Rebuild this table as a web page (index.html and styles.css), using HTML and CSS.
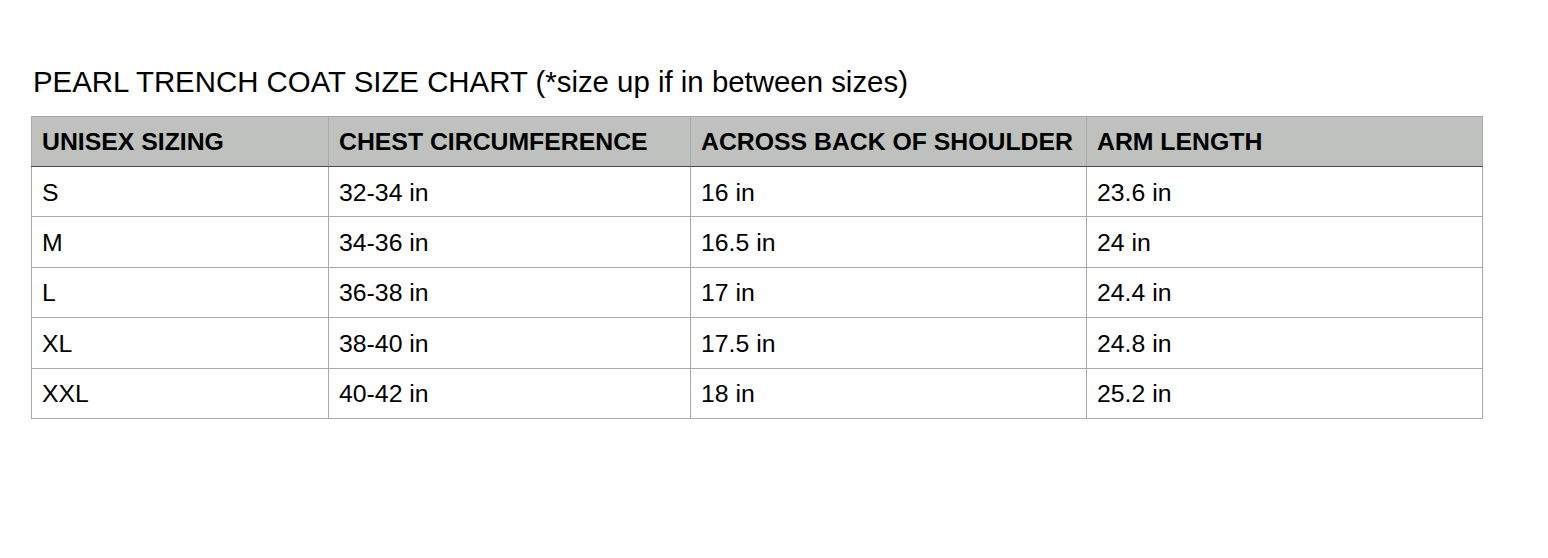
FILE: index.html
```html
<!DOCTYPE html>
<html>
<head>
<meta charset="utf-8">
<link rel="stylesheet" href="styles.css">
</head>
<body>
<div class="chart">
  <h1 class="title">PEARL TRENCH COAT SIZE CHART (*size up if in between sizes)</h1>
  <table class="size-table">
    <colgroup>
      <col class="c1"><col class="c2"><col class="c3"><col class="c4">
    </colgroup>
    <thead>
      <tr><th>UNISEX SIZING</th><th>CHEST CIRCUMFERENCE</th><th>ACROSS BACK OF SHOULDER</th><th>ARM LENGTH</th></tr>
    </thead>
    <tbody>
      <tr><td>S</td><td>32-34 in</td><td>16 in</td><td>23.6 in</td></tr>
      <tr><td>M</td><td>34-36 in</td><td>16.5 in</td><td>24 in</td></tr>
      <tr><td>L</td><td>36-38 in</td><td>17 in</td><td>24.4 in</td></tr>
      <tr><td>XL</td><td>38-40 in</td><td>17.5 in</td><td>24.8 in</td></tr>
      <tr><td>XXL</td><td>40-42 in</td><td>18 in</td><td>25.2 in</td></tr>
    </tbody>
  </table>
</div>
</body>
</html>
```
FILE: styles.css
```css
html, body {
  margin: 0;
  padding: 0;
  background: #ffffff;
}
body {
  font-family: "Liberation Sans", Arial, sans-serif;
  color: #000;
}
.chart {
  padding: 64px 0 0 31px;
}
.title {
  margin: 0 0 0 2px;
  font-weight: normal;
  font-size: 29.4px;
  line-height: 36px;
  height: 52px;
}
.size-table {
  border-collapse: collapse;
  width: 1451px;
  table-layout: fixed;
}
.c1 { width: 297px; }
.c2 { width: 362px; }
.c3 { width: 396px; }
.c4 { width: 396px; }
.size-table th,
.size-table td {
  border: 1px solid #a9a9a9;
  text-align: left;
  padding: 0 0 0 10px;
  font-size: 24.8px;
  white-space: nowrap;
}
.size-table th {
  background: #bfc1bf;
  font-weight: bold;
  height: 49px;
  border-bottom: 1px solid #4a4a4a;
}
.size-table td {
  font-weight: normal;
  padding-top: 2px;
  height: 47.4px;
}
```
